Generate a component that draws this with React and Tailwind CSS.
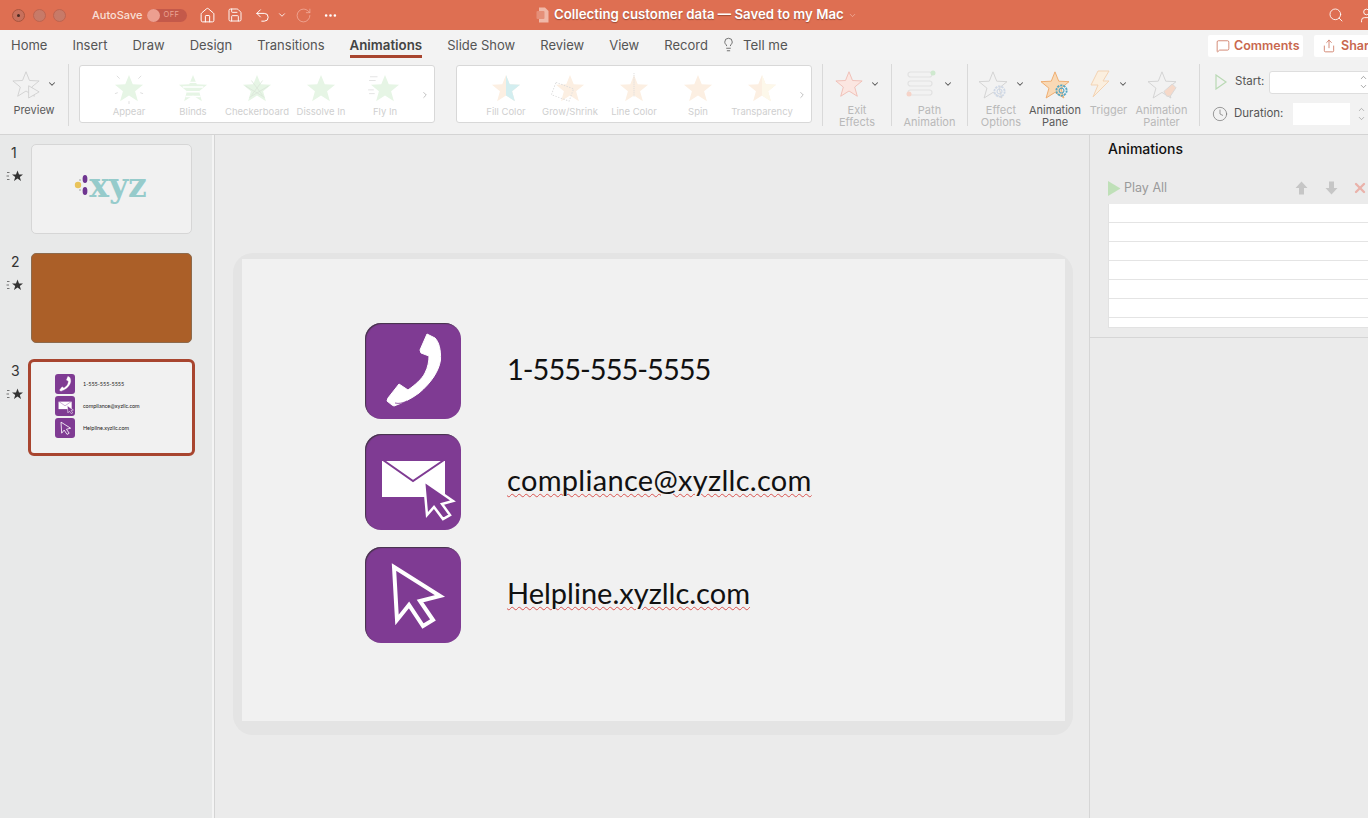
import React from 'react';
import { ChevronDown, ChevronRight, ChevronUp, Clock, Ellipsis, Home, Lightbulb, MessageSquare, RotateCw, Save, Search, Share, Undo2, User, X } from 'lucide-react';

const STAR = '16,2 20,12 31,12.5 22.5,19.5 25.5,30 16,24 6.5,30 9.5,19.5 1,12.5 12,12';

const tabs = ['Home', 'Insert', 'Draw', 'Design', 'Transitions', 'Animations', 'Slide Show', 'Review', 'View', 'Record'];

const Star = ({ fill = 'none', stroke = 'none', size = 30, children }) => (
  <svg width={size} height={size} viewBox="0 0 32 32" className="shrink-0 overflow-visible">
    <polygon points={STAR} fill={fill} stroke={stroke} strokeWidth="1" strokeLinejoin="round" />
    {children}
  </svg>
);

const Caret = () => <ChevronDown size={10} strokeWidth={2.5} className="ml-[7px] shrink-0 text-[#555]" />;

const GalleryItem = ({ label, fill, children }) => (
  <div className="flex w-[64px] shrink-0 flex-col items-center pt-[7px]">
    <Star fill={fill} size={30}>{children}</Star>
    <span className="mt-[2px] whitespace-nowrap text-[9.5px] leading-[14px] text-[#cfcfcf]">{label}</span>
  </div>
);

const Gallery = ({ items, fill }) => (
  <div className="mt-[5px] flex h-[58px] w-[356px] shrink-0 items-start rounded-[3px] border border-[#d8d8d8] bg-white pl-[17px]">
    {items.map((it) => <GalleryItem key={it.label} label={it.label} fill={fill}>{it.extra}</GalleryItem>)}
    <ChevronRight size={10} strokeWidth={1.5} className="mt-[24px] ml-[3px] text-[#9a9a9a]" />
  </div>
);

const Divider = () => <div className="mt-[4px] h-[62px] w-px shrink-0 bg-[#d9d9d9]" />;

const Tool = ({ w, lines, icon, caret, dark }) => (
  <div className="flex shrink-0 flex-col items-center pt-[9px]" style={{ width: w }}>
    <div className="flex h-[29px] items-center">{icon}{caret && <Caret />}</div>
    <div className={`mt-[6px] text-center text-[11px] leading-[12px] whitespace-nowrap ${dark ? 'text-[#5a5a5a]' : 'text-[#b9b9b9]'}`}>
      {lines.map((l) => <div key={l}>{l}</div>)}
    </div>
  </div>
);

const Gear = ({ x, y, color }) => (
  <g transform={`translate(${x} ${y})`} fill="none" stroke={color}>
    <circle r="5.5" strokeWidth="2" strokeDasharray="2.4 1" />
    <circle r="2.6" strokeWidth="1.2" />
  </g>
);

const BlockArrow = ({ down }) => (
  <svg width="13" height="14" viewBox="0 0 13 14" className={down ? 'rotate-180' : ''}>
    <path d="M6.5 0.5L12.5 7H9v6.5H4V7H0.5z" fill="#c6c6c6" />
  </svg>
);

const PhoneGlyph = () => (
  <svg viewBox="0 0 96 96" className="h-full w-full">
    <path d="M62 11 L70 15 C74 19 76 27 75.5 37 C74 48 66 60 54 70 C46 76 37 80 29 83 L27 82 L22 78 L23 75 L34 61 L43 67 C50 62 57 56 60 50 C63 44 64 38 64 33 L56 30 L55 27 Z" fill="#fff" stroke="#fff" strokeWidth="1" strokeLinejoin="round" />
    <path d="M30 80 C34 81 38 80 42 78" stroke="#7f3b93" strokeWidth="0.8" fill="none" />
  </svg>
);

const MailGlyph = () => (
  <svg viewBox="0 0 96 96" className="h-full w-full">
    <rect x="17" y="27" width="63" height="36" fill="#fff" />
    <path d="M18 26 L48 47 L79 26" fill="none" stroke="#7f3b93" strokeWidth="2" />
    <polygon points="59,47 88,67 77,70 85,81 78,85 69,73 62,81" fill="#7f3b93" stroke="#fff" strokeWidth="2.5" />
  </svg>
);

const CursorGlyph = () => (
  <svg viewBox="0 0 96 96" className="h-full w-full">
    <polygon points="29,20 75,49 55,54 68,73 58,79 44,58 32,73" fill="#7f3b93" stroke="#fff" strokeWidth="4" />
  </svg>
);

const IconTile = ({ className, children }) => (
  <div className={`shrink-0 bg-[#7f3b93] ${className}`}>{children}</div>
);

const wavy = 'underline decoration-[#d9534f] decoration-wavy decoration-1 underline-offset-2';

const contacts = [
  { glyph: <PhoneGlyph />, text: <span className="tracking-[-1px]">1-555-555-5555</span> },
  { glyph: <MailGlyph />, text: <span className={`tracking-[0.3px] ${wavy}`}>compliance@xyzllc.com</span> },
  { glyph: <CursorGlyph />, text: <span className={wavy}>Helpline.xyzllc.com</span> },
];

const miniContacts = [
  { glyph: <PhoneGlyph />, text: '1-555-555-5555' },
  { glyph: <MailGlyph />, text: 'compliance@xyzllc.com' },
  { glyph: <CursorGlyph />, text: 'Helpline.xyzllc.com' },
];

const Thumb = ({ n, children, selected, className }) => (
  <div className="flex h-[90px] shrink-0">
    <div className="w-[31px] shrink-0 pl-[11px] pt-[1px]">
      <div className="text-[14px] leading-[16px] text-[#333]">{n}</div>
      <svg width="18" height="12" viewBox="0 0 18 12" className="-ml-[5px] mt-[9px]">
        <polygon points="11.5,0.5 13,4.5 17,4.5 13.8,7 15,11 11.5,8.5 8,11 9.2,7 6,4.5 10,4.5" fill="#333" />
        <path d="M1 2.5h2.5M0.5 6h2.5M1 9.5h2.5" stroke="#555" strokeWidth="0.8" />
      </svg>
    </div>
    {selected ? (
      <div className="-mx-[3px] -my-[3px] h-[97px] w-[167px] rounded-[6px] border-[3px] border-[#a8452f] bg-[#f1f1f1] pl-[24px] pt-[12px]">{children}</div>
    ) : (
      <div className={`h-[90px] w-[161px] rounded-[5px] ${className}`}>{children}</div>
    )}
  </div>
);

export default function App() {
  return (
    <div className="flex h-[818px] w-[1368px] flex-col overflow-hidden bg-[#ebebeb] font-['Inter','Liberation_Sans',sans-serif]">
      {/* title bar */}
      <div className="flex h-[30px] shrink-0 items-center bg-[#de6f52] text-white">
        <div className="flex w-[536px] shrink-0 items-center pl-[12px]">
          <div className="flex h-[13px] w-[13px] items-center justify-center rounded-full border border-[#a9553f] bg-[#c7705c]">
            <div className="h-[3px] w-[3px] rounded-full bg-[#4a2a22]" />
          </div>
          <div className="ml-[8px] h-[13px] w-[13px] rounded-full border border-[#bd6450] bg-[#c77a68]" />
          <div className="ml-[7px] h-[13px] w-[13px] rounded-full border border-[#bd6450] bg-[#c77a68]" />
          <span className="ml-[26px] text-[11px] font-medium text-[#f9e0d8]">AutoSave</span>
          <div className="ml-[5px] flex h-[13px] w-[40px] items-center rounded-full bg-[#c4594a]">
            <div className="h-[13px] w-[13px] rounded-full bg-[#ec9f90]" />
            <span className="ml-[3px] text-[7.5px] tracking-[0.5px] text-[#eba595]">OFF</span>
          </div>
          <Home size={17} strokeWidth={1.4} className="ml-[12px]" />
          <Save size={16} strokeWidth={1.4} className="ml-[11px]" />
          <Undo2 size={17} strokeWidth={1.4} className="ml-[11px]" />
          <ChevronDown size={10} strokeWidth={2} className="ml-[6px]" />
          <RotateCw size={17} strokeWidth={1} className="ml-[8px] text-[#f3b4a4]" />
          <Ellipsis size={15} strokeWidth={2.2} className="ml-[11px]" />
        </div>
        <svg width="13" height="16" viewBox="0 0 13 16" className="shrink-0">
          <path d="M3 0.5h6l3.5 3.5v11.5h-9.5z" fill="#f0b8a8" />
          <rect x="0.5" y="4" width="8" height="8" rx="1" fill="#e58f78" />
        </svg>
        <span className="ml-[5px] text-[13.25px] font-semibold whitespace-nowrap [text-shadow:0_1px_1px_rgba(90,40,25,0.5)]">Collecting customer data — Saved to my Mac</span>
        <ChevronDown size={9} strokeWidth={1.5} className="ml-[4px] text-[#f6c9bc]" />
        <Search size={16} strokeWidth={1.3} className="ml-auto" />
        <User size={17} strokeWidth={1.3} className="-mr-[7px] ml-[14px] shrink-0" />
      </div>

      {/* tabs */}
      <div className="flex h-[30px] shrink-0 items-start bg-[#f3f3f3] pl-[11px] pt-[6px] text-[13px] text-[#555]">
        <div className="flex gap-[25px]">
          {tabs.map((t) => t === 'Animations' ? (
            <div key={t} className="h-[22px] border-b-[3px] border-[#a8452f] text-[13.3px] font-semibold text-[#444]">{t}</div>
          ) : (
            <div key={t} className="whitespace-nowrap">{t}</div>
          ))}
        </div>
        <Lightbulb size={15} strokeWidth={1.3} className="ml-[13px] mt-[1px]" />
        <span className="ml-[7px] text-[13.3px]">Tell me</span>
        <div className="-mt-[1px] ml-auto flex h-[22px] w-[95px] items-center rounded-[2px] bg-white pl-[8px] text-[12.5px] font-semibold text-[#c8684f]">
          <MessageSquare size={14} strokeWidth={1.3} />
          <span className="ml-[4px]">Comments</span>
        </div>
        <div className="-mt-[1px] -mr-[14px] ml-[11px] flex h-[22px] w-[68px] shrink-0 items-center rounded-[2px] bg-white pl-[8px] text-[12.5px] font-semibold text-[#c8684f]">
          <Share size={14} strokeWidth={1.3} />
          <span className="ml-[5px]">Share</span>
        </div>
      </div>

      {/* ribbon */}
      <div className="flex h-[75px] shrink-0 items-start border-b border-[#d4d4d4] bg-[#f2f2f2]">
        <Tool w={68} dark lines={['Preview']} caret icon={
          <Star stroke="#cfcfcf" size={28}>
            <polygon points="19,18 31,25 19,32" fill="#f2f2f2" stroke="#cfcfcf" />
          </Star>
        } />
        <Divider />
        <div className="ml-[10px]">
          <Gallery fill="#e6f5e5" items={[
            { label: 'Appear', extra: <path d="M3 3l3 3M29 3l-3 3M1 22l3-1M31 22l-3-1M16 30v3" stroke="#dddddd" fill="none" /> },
            { label: 'Blinds', extra: <path d="M8 10h16M5 15h22M9 20h14M8 25h16" stroke="#fff" strokeWidth="1.5" /> },
            { label: 'Checkerboard', extra: <path d="M10 8l12 16M22 8l-12 16M4 14l20 12M28 14l-20 12" stroke="#d9e4d8" strokeWidth="0.8" /> },
            { label: 'Dissolve In' },
            { label: 'Fly In', extra: <path d="M0 4h8M-1 8h7M-2 18h6M-1 22h6" stroke="#e2e2e2" /> },
          ]} />
        </div>
        <div className="ml-[21px]">
          <Gallery fill="#fcefe2" items={[
            { label: 'Fill Color', extra: <polygon points="16,2 20,12 31,12.5 22.5,19.5 25.5,30 16,24" fill="#d3eef0" /> },
            { label: 'Grow/Shrink', extra: <rect x="-2" y="13" width="20" height="14" fill="none" stroke="#dcdcdc" strokeDasharray="1.5 1.5" transform="rotate(20 8 20)" /> },
            { label: 'Line Color', extra: <path d="M16 0v26" stroke="#dcdcdc" strokeDasharray="1 1" /> },
            { label: 'Spin' },
            { label: 'Transparency', extra: <polygon points="16,2 20,12 31,12.5 22.5,19.5 25.5,30 16,24" fill="#fdf8ea" /> },
          ]} />
        </div>
        <div className="ml-[10px]"><Divider /></div>
        <Tool w={68} lines={['Exit', 'Effects']} caret icon={<Star fill="#fbe6e1" stroke="#efbcb2" size={28} />} />
        <Divider />
        <Tool w={75} lines={['Path', 'Animation']} caret icon={
          <svg width="30" height="28" viewBox="0 0 30 28" fill="none" stroke="#e2e2e2" strokeWidth="1.2">
            <rect x="2" y="2" width="24" height="5" rx="2.5" />
            <rect x="2" y="11" width="24" height="5" rx="2.5" />
            <rect x="2" y="20" width="24" height="5" rx="2.5" />
            <circle cx="27" cy="3" r="2.5" fill="#cfe9cf" stroke="none" />
            <circle cx="3" cy="24" r="2.5" fill="#f6d3c8" stroke="none" />
          </svg>
        } />
        <Divider />
        <div className="w-[6px] shrink-0" />
        <Tool w={54} lines={['Effect', 'Options']} caret icon={
          <svg width="30" height="28" viewBox="0 0 32 30" className="overflow-visible"><polygon points={STAR} fill="none" stroke="#d2d2d2" /><Gear x={23} y={23} color="#cfd8e6" /></svg>
        } />
        <Tool w={54} dark lines={['Animation', 'Pane']} icon={
          <svg width="30" height="28" viewBox="0 0 32 30" className="overflow-visible"><polygon points={STAR} fill="#f9d9b5" stroke="#eeaa6c" /><Gear x={23} y={22} color="#54a7c4" /></svg>
        } />
        <Tool w={53} lines={['Trigger']} caret icon={
          <svg width="22" height="28" viewBox="0 0 22 28" fill="#fbefdf" stroke="#f3d3b3"><path d="M9 1h11l-6 10h6L4 27l5-12H2z" /></svg>
        } />
        <Tool w={53} lines={['Animation', 'Painter']} icon={
          <svg width="30" height="28" viewBox="0 0 32 30" className="overflow-visible"><polygon points={STAR} fill="none" stroke="#d2d2d2" /><path d="M21 28l-3-5 9-8 4 4-6 9z" fill="#f6d9c9" stroke="#d8d8d8" /></svg>
        } />
        <div className="ml-[11px]"><Divider /></div>
        <div className="ml-[14px] flex w-[168px] shrink-0 flex-col pt-[10px] text-[11.5px] text-[#555]">
          <div className="flex h-[24px] items-center">
            <svg width="14" height="16" viewBox="0 0 14 16" fill="none" stroke="#b9d9b4" strokeWidth="1.2"><path d="M2 1l10 7-10 7z" /></svg>
            <span className="ml-[7px] w-[34px]">Start:</span>
            <div className="h-[23px] w-[110px] shrink-0 rounded-[3px] border border-[#dedede] bg-white" />
            <div className="-ml-[20px] flex shrink-0 flex-col text-[#666]">
              <ChevronUp size={9} strokeWidth={1.5} />
              <ChevronDown size={9} strokeWidth={1.5} />
            </div>
          </div>
          <div className="mt-[8px] flex h-[24px] items-center">
            <Clock size={16} strokeWidth={1.1} className="-ml-[2px] shrink-0 text-[#777]" />
            <span className="ml-[6px] w-[52px]">Duration:</span>
            <div className="ml-[7px] h-[22px] w-[57px] shrink-0 bg-white" />
            <div className="ml-[7px] flex shrink-0 flex-col text-[#888]">
              <ChevronUp size={9} strokeWidth={1.5} />
              <ChevronDown size={9} strokeWidth={1.5} />
            </div>
          </div>
        </div>
      </div>

      {/* workspace */}
      <div className="flex min-h-0 flex-1">
        <div className="flex w-[212px] shrink-0 flex-col gap-[19px] bg-[#e8e9e9] pt-[9px]">
          <Thumb n="1" className="flex items-center justify-center border border-[#d6d6d6] bg-[#f1f1f1] pb-[6px] pr-[2px]">
            <svg width="16" height="20" viewBox="0 0 16 20" className="-mr-[1px] mb-[2px]">
              <ellipse cx="11" cy="4" rx="2.4" ry="4" fill="#6f3590" />
              <ellipse cx="11" cy="16" rx="2.4" ry="4" fill="#6f3590" />
              <circle cx="4" cy="10" r="3.2" fill="#e9c35a" />
              <circle cx="6" cy="5" r="1" fill="#bdbdbd" />
              <circle cx="6" cy="15" r="1" fill="#bdbdbd" />
            </svg>
            <span className="font-['DejaVu_Serif',serif] text-[33px] leading-[30px] font-bold text-[#96cbcb]">xyz</span>
          </Thumb>
          <Thumb n="2" className="border border-[#8d6a4c] bg-[#ab5f28]" />
          <Thumb n="3" selected>
            <div className="flex flex-col gap-[2px]">
              {miniContacts.map((c) => (
                <div key={c.text} className="flex items-center">
                  <IconTile className="h-[20px] w-[20px] rounded-[3px]">{c.glyph}</IconTile>
                  <span className="ml-[8px] font-['Lato',sans-serif] text-[5.5px] whitespace-nowrap text-[#222]">{c.text}</span>
                </div>
              ))}
            </div>
          </Thumb>
        </div>
        <div className="w-[3px] shrink-0 border-r border-[#d4d4d4] bg-[#f4f4f4]" />

        <div className="min-w-0 flex-1 pl-[18px] pt-[118px]">
          <div className="h-[482px] w-[840px] rounded-[20px] bg-[#e4e4e4] pl-[9px] pt-[6px]">
            <div className="flex h-[462px] w-[823px] flex-col bg-[#f1f1f1] pl-[123px] pt-[64px]">
              {contacts.map((c, i) => (
                <div key={i} className={`flex items-center ${i === 1 ? 'mt-[15px]' : i === 2 ? 'mt-[17px]' : ''}`}>
                  <IconTile className="h-[96px] w-[96px] rounded-[16px] shadow-[inset_1px_1px_1px_rgba(50,50,50,0.75)]">{c.glyph}</IconTile>
                  <div className="-mt-[4px] ml-[46px] font-['Lato',sans-serif] text-[29px] whitespace-nowrap text-[#111]">{c.text}</div>
                </div>
              ))}
            </div>
          </div>
        </div>

        <div className="w-[279px] shrink-0 overflow-hidden border-l border-[#d6d6d6] bg-[#ebebeb]">
          <div className="h-[203px] border-b border-[#d6d6d6] pl-[18px] pt-[5px]">
            <div className="text-[14px] leading-[18px] font-medium text-[#111]">Animations</div>
            <div className="mt-[20px] flex h-[20px] items-center text-[12.5px] text-[#9a9a9a]">
              <svg width="13" height="15" viewBox="0 0 13 15" className="shrink-0"><path d="M0 0l12.5 7.5L0 15z" fill="#bfe0b8" /></svg>
              <span className="ml-[3px] whitespace-nowrap">Play All</span>
              <div className="ml-[128px]"><BlockArrow /></div>
              <div className="ml-[17px]"><BlockArrow down /></div>
              <X size={16} strokeWidth={3.5} className="ml-[14px] shrink-0 text-[#eab2aa]" />
            </div>
            <div className="mt-[6px] -mr-[4px] flex h-[124px] flex-col border-b border-l border-[#e2e2e2] bg-white">
              {[0, 1, 2, 3, 4, 5].map((r) => <div key={r} className="h-[19px] shrink-0 border-b border-[#e4e4e4]" />)}
            </div>
          </div>
        </div>
      </div>
    </div>
  );
}
